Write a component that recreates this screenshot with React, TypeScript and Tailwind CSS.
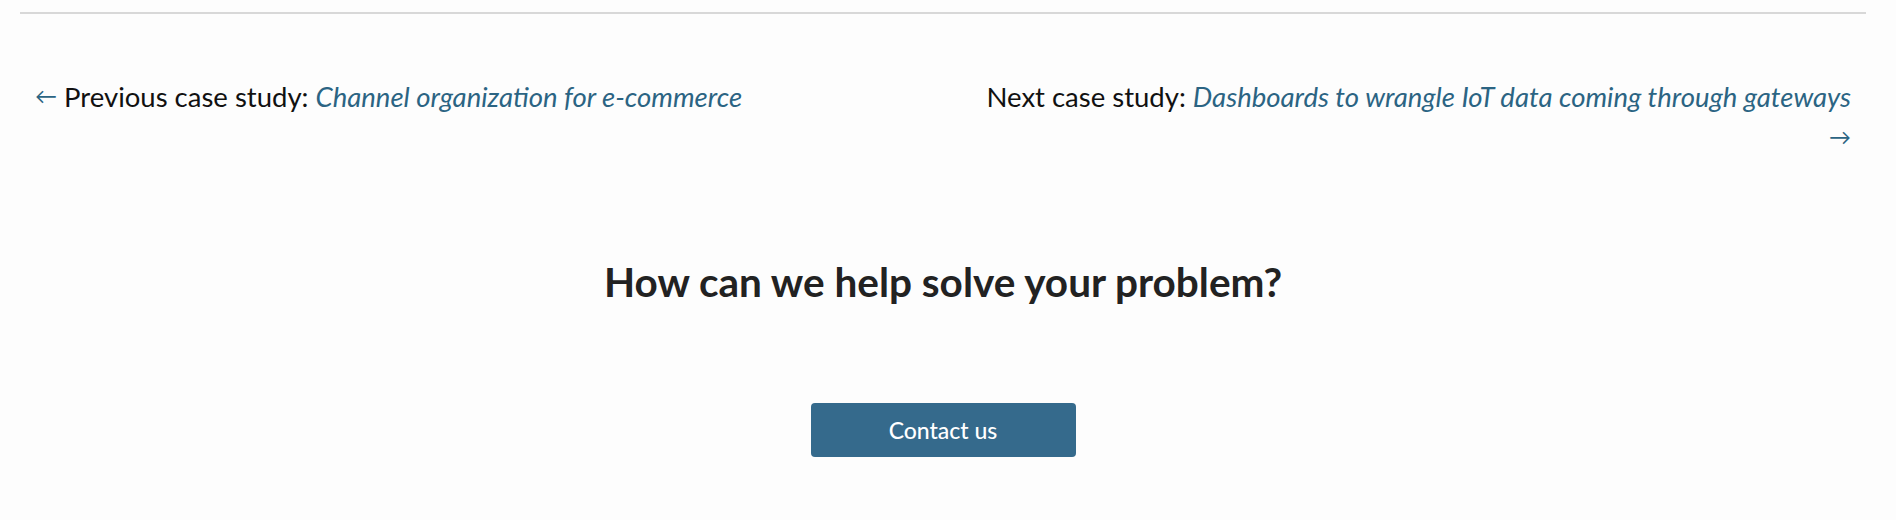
import React from "react";

const linkClass = "italic text-[#2b6483] hover:underline";
const arrowClass = "align-[3px] text-[22px] leading-none text-[#2b6483]";

export default function App() {
  return (
    <div className="min-h-[520px] bg-[#fdfdfd] font-['Lato','Noto_Sans',sans-serif] text-[#111]">
      <div className="ml-5 mr-[30px] pt-3">
        <hr className="border-0 border-t-2 border-[#d8d8d8]" />

        {/* prev / next navigation */}
        <nav className="mt-[62px] flex justify-between px-[15px] text-[27.5px] leading-[41px]">
          <p>
            <span className={arrowClass}>←</span> Previous case study:{" "}
            <a href="#" className={linkClass}>
              Channel organization for e-commerce
            </a>
          </p>
          <p className="text-right">
            Next case study:{" "}
            <a href="#" className={linkClass}>
              Dashboards to wrangle IoT data coming through gateways
            </a>
            <br />
            <span className={arrowClass}>→</span>
          </p>
        </nav>

        <h2 className="mt-[101px] text-center text-[40.5px] leading-[46px] font-bold text-[#222]">
          How can we help solve your problem?
        </h2>

        <div className="mt-[98px] flex justify-center">
          <button className="h-[54px] w-[265px] rounded-[4px] bg-[#356a8c] text-[23px] font-medium text-white">
            Contact us
          </button>
        </div>
      </div>
    </div>
  );
}
